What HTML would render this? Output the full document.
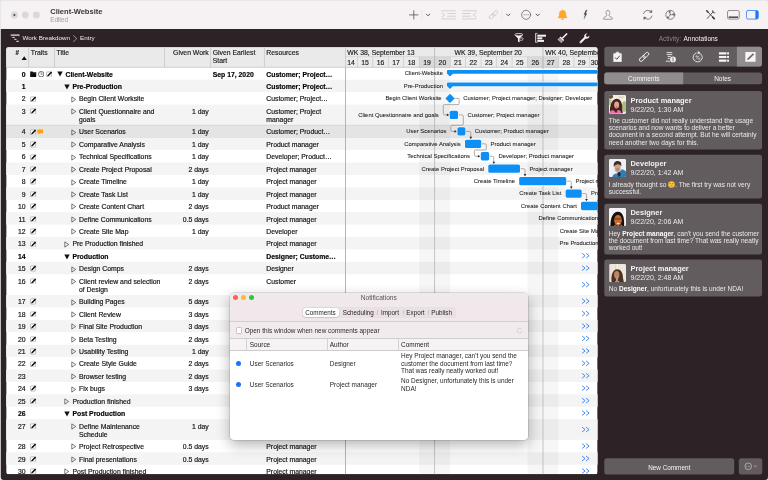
<!DOCTYPE html>
<html lang="en"><head><meta charset="utf-8"><title>Client-Website</title>
<style>
*{box-sizing:border-box;margin:0;padding:0}
html,body{width:768px;height:480px;overflow:hidden;background:#e9e9e9}
body{font-family:"Liberation Sans","DejaVu Sans",sans-serif;position:relative;-webkit-font-smoothing:antialiased}
.abs,.abs *{position:absolute}
#win{position:absolute;left:0;top:0;width:768px;height:480px;overflow:hidden;background:#2d2326;will-change:transform;transform:translateZ(0)}
#tbar{position:absolute;left:0;top:0;width:768px;height:29px;background:#f6f1f3}
.t{position:absolute;white-space:nowrap;line-height:1}
.tl{position:absolute;border-radius:50%;width:6.8px;height:6.8px;background:#dcd7d9;top:11.6px}
#tbl{position:absolute;overflow:hidden}
.hd{position:absolute;top:0;height:19.8px;background:#e8e8e8;border-right:0.6px solid #c4c4c4;border-bottom:0.6px solid #c9c9c9}
.ht{position:absolute;font-size:6.85px;color:#1a1a1a;white-space:nowrap;line-height:8.3px;-webkit-text-stroke:0.15px #1a1a1a}
.row{position:absolute;left:0;width:591px}
.c{position:absolute;font-size:6.85px;color:#141414;white-space:nowrap;line-height:8.3px;-webkit-text-stroke:0.18px #141414}
.b{font-weight:700;color:#000}
.g{position:absolute;font-size:5.9px;color:#1a1a1a;white-space:nowrap;line-height:8px;-webkit-text-stroke:0.06px #1a1a1a}
.bar{position:absolute;background:#0d8ff4;border-radius:1.6px;box-shadow:0 0 0 0.7px rgba(255,255,255,.85)}
.card{position:absolute;left:604.3px;width:157.7px}
.nm{position:absolute;left:26.2px;font-size:7.45px;font-weight:700;color:#f4f2f3;white-space:nowrap;line-height:9px}
.dt{position:absolute;left:26.2px;font-size:7px;color:#ecebeb;white-space:nowrap;line-height:9px}
.bd{position:absolute;left:4.4px;font-size:6.57px;color:#eceaea;white-space:nowrap;line-height:7.25px}
.bd b{color:#fff}
.av{position:absolute;left:4.4px;width:17.8px;height:18.2px;border-radius:1.8px;overflow:hidden}
.n{position:absolute;font-size:6.45px;color:#262626;white-space:nowrap;line-height:7.3px}
</style></head><body>
<div id="win">

<div id="tbar">
<svg style="position:absolute;left:8px;top:8px" width="36" height="14" viewBox="8 8 36 14"><circle cx="14.400" cy="15" r="3.450" fill="#dcd7d9"/><circle cx="25.350" cy="15" r="3.450" fill="#dcd7d9"/><circle cx="36.300" cy="15" r="3.450" fill="#dcd7d9"/><circle cx="14.400" cy="15" r="1.050" fill="#4a4648"/></svg>
<div class="t" style="left:50.2px;top:8px;font-size:7.55px;font-weight:700;color:#3a3638">Client-Website</div>
<div class="t" style="left:50.2px;top:17px;font-size:6.3px;color:#a09c9e">Edited</div>
<svg style="position:absolute;left:400px;top:0" width="368" height="29" viewBox="400 0 368 29" fill="none" stroke-linecap="round" stroke-linejoin="round">
<g stroke="#565254" stroke-width="0.8">
<path d="M409.600 14.900h8.400M413.800 10.700v8.400"/>
<path d="M426.400 14.100l1.700 1.700 1.700-1.700" stroke-width="1"/>
<path d="M506.600 14.100l1.700 1.700 1.700-1.700" stroke-width="1"/>
<path d="M536.050 14.100l1.700 1.700 1.700-1.700" stroke-width="1"/>
<circle cx="526.100" cy="14.800" r="4.500" stroke-width="0.7"/>
</g>
<g fill="#565254"><circle cx="524.100" cy="14.800" r="0.500"/><circle cx="526.100" cy="14.800" r="0.500"/><circle cx="528.100" cy="14.800" r="0.500"/></g>
<path d="M421.800 10.500v9M501.800 10.500v9" stroke="#e6e1e3" stroke-width="0.600"/>
<g stroke="#c6c2c4" stroke-width="0.7">
<path d="M441.600 10.800h13.800M447.800 13.500h7.600M447.800 16.200h7.600M441.600 18.900h13.800M442 13l2.800 1.900-2.800 1.900"/>
<path d="M462.600 10.800h13.800M462.600 13.500h7.600M462.600 16.200h7.600M462.600 18.900h13.800M476 13l-2.800 1.900 2.800 1.900"/>
<g transform="translate(493.400,14.800) rotate(-42)"><rect x="-5.300" y="-1.500" width="6.300" height="3" rx="1.500"/><rect x="-1" y="-1.500" width="6.300" height="3" rx="1.500"/></g>
</g>
<path d="M562.600 10.200c-2.200 0-3.300 1.600-3.300 3.500 0 2-.5 2.900-1.100 3.600-.3.300-.1.600.3.600h8.200c.4 0 .6-.3.300-.6-.6-.7-1.100-1.600-1.100-3.600 0-1.900-1.100-3.500-3.300-3.500zM561.400 18.700a1.200 1.200 0 0 0 2.400 0z" fill="#ffa62b" stroke="#ffa62b" stroke-width="0.300"/>
<path d="M585.900 10.300l-2 4.200h1.300l-1.300 4.600 3-5.500h-1.400l1.700-3.300z" fill="#3f3b3d" stroke="#3f3b3d" stroke-width="0.200"/>
<path d="M607.900 10.500c-1.200 0-1.900.9-1.900 2 0 .9.400 1.600.7 2.300.3.700 0 1.300-1 1.700-1.300.5-2.300 1-2.300 2.300 0 .3.200.4.400.4h8.200c.2 0 .4-.1.400-.4 0-1.300-1-1.800-2.300-2.300-1-.4-1.300-1-1-1.700.3-.7.700-1.400.7-2.300 0-1.100-.7-2-1.900-2z" stroke="#7d797b" stroke-width="0.750"/>
<g stroke="#565254" stroke-width="0.700">
<path d="M643.500 13.600a4.500 4.500 0 0 1 8-1.400M652.100 16a4.500 4.500 0 0 1-8 1.400"/>
<path d="M651.900 10.400l-.2 2.100-2.100-.3z M643.700 19.200l.2-2.100 2.100.3z" fill="#565254" stroke-width="0.400"/>
<circle cx="670.300" cy="14.800" r="4.500"/>
<path d="M670.300 14.800L669.600 11.800M670.300 14.800l3.200-.2M670.300 14.800l-2.300 2.800" stroke-width="0.600"/>
<path d="M668.800 11.300l1.700.2-.6 1.500zM673.900 13.700l-.2 1.700-1.400-.9zM667.400 18.200l.2-1.700 1.400.9z" fill="#565254" stroke-width="0.300"/>
</g>
<g stroke="#3f3b3d" stroke-width="0.850">
<path d="M707.600 11.600l6.400 6.800M713.400 11.500l-6.200 7"/>
<path d="M706.700 10.700l1.300 1.400" stroke-width="1.500"/>
<path d="M712.600 17l1.600 1.700" stroke-width="1.700"/>
<path d="M712.500 10.600a2 2 0 0 0 2.400 2.400" stroke-width="0.800"/>
</g>
<rect x="727.500" y="10.500" width="11.800" height="8.600" rx="1.500" stroke="#8b8789" stroke-width="0.900"/>
<path d="M728.600 17.200h9.600" stroke="#4a4648" stroke-width="1.500" stroke-linecap="butt"/>
<rect x="746.500" y="10.500" width="11.800" height="8.600" rx="1.500" stroke="#3f8cff" stroke-width="0.900"/>
<path d="M755.400 10.700h1.400a1.400 1.400 0 0 1 1.400 1.400v5.400a1.400 1.400 0 0 1-1.400 1.400H755.400z" fill="#1f74f6"/>
</svg>
</div>
<svg style="position:absolute;left:8px;top:32px" width="14" height="12" viewBox="0 0 14 12" fill="none" stroke="#f0eeee" stroke-width="0.9" stroke-linecap="round">
<path d="M3.300 3.100H11" stroke-width="1.200" stroke-linecap="butt"/><path d="M3.100 2.700v1.300M11.200 2.700v1.300" stroke-width="0.500"/><path d="M4.400 5.400h2.200M6.300 7.300h2.200M8.300 9.300h2.600" stroke-width="0.950" stroke-linecap="butt"/></svg>
<div class="t" style="left:22.5px;top:34.6px;font-size:6.25px;color:#efeded">Work Breakdown</div>
<svg style="position:absolute;left:72px;top:33.500px" width="6" height="10" viewBox="0 0 6 10" fill="none" stroke="#c4c0c1" stroke-width="0.700"><path d="M1.200 1.300l3.600 3.300L1.200 7.900"/></svg>
<div class="t" style="left:80px;top:34.6px;font-size:6.25px;color:#efeded">Entry</div>
<svg style="position:absolute;left:508px;top:30px" width="90" height="16" viewBox="508 30 90 16" fill="#f4f2f2" stroke="none">
<ellipse cx="518.800" cy="34.700" rx="4.100" ry="1.150" fill="none" stroke="#f4f2f2" stroke-width="0.800"/>
<path d="M514.900 35.200c1.500.9 6.300.9 7.800 0l-3.100 3.300v3.800l-1.600-.6v-3.200z"/>
<path d="M520 38.300c1.600-.9 3.200-.5 3.200.6s-1.600 1.700-3.200 1.300" fill="none" stroke="#f4f2f2" stroke-width="0.700"/>
<path d="M535.700 33.200v9.300" stroke="#f4f2f2" stroke-width="0.900"/>
<path d="M535.700 33.400h2M535.700 42.300h2" stroke="#f4f2f2" stroke-width="0.600"/>
<rect x="537.300" y="34.700" width="8.700" height="2"/><rect x="537.300" y="37.300" width="5" height="2"/><rect x="537.300" y="39.900" width="6.700" height="2"/>
<g transform="translate(562.200,38.400) rotate(-45)"><rect x="0" y="-0.800" width="7" height="1.600" rx="0.500"/><rect x="-1.300" y="-2.600" width="1.500" height="5.200"/><rect x="-4" y="-2.600" width="2.400" height="5.200" fill="#bdb9ba"/><path d="M-4 -1.300h2.400M-4 0h2.400M-4 1.300h2.400" stroke="#4a4446" stroke-width="0.400"/></g>
<path d="M587.500 33.600a2.700 2.700 0 0 0-3.200 3.500l-4.500 4.500a1.050 1.050 0 0 0 1.500 1.500l4.500-4.500a2.700 2.700 0 0 0 3.500-3.200l-1.600 1.600-1.500-.4-.4-1.500z"/>
<circle cx="580.700" cy="42.100" r="0.450" fill="#2d2326"/>
</svg>
<div class="t" style="left:658.700px;top:35.900px;font-size:6.500px;color:#8a8587;word-spacing:1px">Activity: <span style="color:#f4f2f2">Annotations</span></div>
<div id="tbl" style="left:6px;top:47px;width:592px;height:428px">
<svg style="position:absolute;left:0;top:0" width="592" height="428" viewBox="6 47 592 428"><defs><clipPath id="tclip"><rect x="6.2" y="47.2" width="591.4" height="427.1" rx="2.200"/></clipPath></defs><g clip-path="url(#tclip)"><rect x="6.2" y="47.2" width="591.4" height="427.1" fill="#fff"/><rect x="0" y="79.73" width="700" height="12.43" fill="#f4f4f4"/><rect x="0" y="104.59" width="700" height="20.6" fill="#f4f4f4"/><rect x="0" y="125.19" width="700" height="12.43" fill="#e4e4e4"/><rect x="0" y="124.89" width="700" height="0.600" fill="#cbcbcb"/><rect x="0" y="137.32" width="700" height="0.600" fill="#cbcbcb"/><rect x="0" y="137.62" width="700" height="12.43" fill="#f4f4f4"/><rect x="0" y="162.48" width="700" height="12.43" fill="#f4f4f4"/><rect x="0" y="187.34" width="700" height="12.43" fill="#f4f4f4"/><rect x="0" y="212.2" width="700" height="12.43" fill="#f4f4f4"/><rect x="0" y="237.06" width="700" height="12.43" fill="#f4f4f4"/><rect x="0" y="261.92" width="700" height="12.43" fill="#f4f4f4"/><rect x="0" y="294.95" width="700" height="12.43" fill="#f4f4f4"/><rect x="0" y="319.81" width="700" height="12.43" fill="#f4f4f4"/><rect x="0" y="344.67" width="700" height="12.43" fill="#f4f4f4"/><rect x="0" y="369.53" width="700" height="12.43" fill="#f4f4f4"/><rect x="0" y="394.39" width="700" height="12.43" fill="#f4f4f4"/><rect x="0" y="419.25" width="700" height="20.6" fill="#f4f4f4"/><rect x="0" y="452.28" width="700" height="12.43" fill="#f4f4f4"/><rect x="419.23" y="67.3" width="30.94" height="420" fill="#000" fill-opacity="0.035"/><rect x="527.52" y="67.3" width="30.94" height="420" fill="#000" fill-opacity="0.035"/><rect x="345" y="67.3" width="0.800" height="420" fill="#a4a4a4"/><rect x="0" y="40" width="700" height="27.3" fill="#eaeaea"/><rect x="345.4" y="56.8" width="300" height="10.5" fill="#ececec"/><rect x="419.23" y="56.8" width="15.47" height="10.5" fill="#d9d9d9"/><rect x="434.7" y="56.8" width="15.47" height="10.5" fill="#d9d9d9"/><rect x="527.52" y="56.8" width="15.47" height="10.5" fill="#d9d9d9"/><rect x="542.99" y="56.8" width="15.47" height="10.5" fill="#d9d9d9"/><rect x="345.4" y="56.5" width="300" height="0.600" fill="#cdcdcd"/><rect x="357.05" y="56.8" width="0.600" height="10.5" fill="#c4c4c4"/><rect x="372.52" y="56.8" width="0.600" height="10.5" fill="#c4c4c4"/><rect x="387.99" y="56.8" width="0.600" height="10.5" fill="#c4c4c4"/><rect x="403.46" y="56.8" width="0.600" height="10.5" fill="#c4c4c4"/><rect x="418.93" y="56.8" width="0.600" height="10.5" fill="#c4c4c4"/><rect x="434.4" y="56.8" width="0.600" height="10.5" fill="#c4c4c4"/><rect x="449.87" y="56.8" width="0.600" height="10.5" fill="#c4c4c4"/><rect x="465.34" y="56.8" width="0.600" height="10.5" fill="#c4c4c4"/><rect x="480.81" y="56.8" width="0.600" height="10.5" fill="#c4c4c4"/><rect x="496.28" y="56.8" width="0.600" height="10.5" fill="#c4c4c4"/><rect x="511.75" y="56.8" width="0.600" height="10.5" fill="#c4c4c4"/><rect x="527.22" y="56.8" width="0.600" height="10.5" fill="#c4c4c4"/><rect x="542.69" y="56.8" width="0.600" height="10.5" fill="#c4c4c4"/><rect x="558.16" y="56.8" width="0.600" height="10.5" fill="#c4c4c4"/><rect x="573.63" y="56.8" width="0.600" height="10.5" fill="#c4c4c4"/><rect x="589.1" y="56.8" width="0.600" height="10.5" fill="#c4c4c4"/><rect x="604.57" y="56.8" width="0.600" height="10.5" fill="#c4c4c4"/><rect x="28.4" y="47.2" width="0.700" height="20.1" fill="#c2c2c2"/><rect x="54.15" y="47.2" width="0.700" height="20.1" fill="#c2c2c2"/><rect x="164.15" y="47.2" width="0.700" height="20.1" fill="#c2c2c2"/><rect x="210.35" y="47.2" width="0.700" height="20.1" fill="#c2c2c2"/><rect x="263.95" y="47.2" width="0.700" height="20.1" fill="#c2c2c2"/><rect x="345.05" y="47.2" width="0.700" height="20.1" fill="#c2c2c2"/><rect x="0" y="66.85" width="700" height="0.750" fill="#c2c2c2"/><rect x="434.35" y="47.2" width="0.700" height="440" fill="#aeaeae"/><rect x="542.64" y="47.2" width="0.700" height="440" fill="#aeaeae"/><path d="M447.9 70H700V73.7H452.9L449.9 76.5L446.9 73.5V71Q446.9 70 447.9 70z" fill="#0d8ff4" stroke="#fff" stroke-opacity="0.9" stroke-width="1.300" paint-order="stroke" stroke-linejoin="round"/><path d="M447.9 82.43H700V86.13H452.9L449.9 88.93L446.9 85.93V83.43Q446.9 82.43 447.9 82.43z" fill="#0d8ff4" stroke="#fff" stroke-opacity="0.9" stroke-width="1.300" paint-order="stroke" stroke-linejoin="round"/><path d="M450 93.67L454.700 98.38L450 103.08L445.300 98.38z" fill="#0d8ff4" stroke="#fff" stroke-opacity="0.9" stroke-width="1.300" paint-order="stroke" stroke-linejoin="round"/><g fill="none" stroke="#707070" stroke-width="0.550" stroke-linejoin="round"><path d="M454.8 98.38H458Q459.2 98.38 459.2 99.58V103.39Q459.2 104.59 458 104.59H444.5Q443.3 104.59 443.3 105.79V113.69Q443.3 114.89 444.5 114.89H448.2"/><path d="M449.2 114.89l-2.400 -1.300v2.600z" fill="#2a2a2a" stroke="none"/><path d="M458 114.89H462.1Q463.3 114.89 463.3 116.09V123.99Q463.3 125.19 462.1 125.19H452Q450.8 125.19 450.8 126.39V130.21Q450.8 131.41 452 131.41H455.9"/><path d="M456.9 131.41l-2.400 -1.300v2.600z" fill="#2a2a2a" stroke="none"/><path d="M465.4 131.41H469.6Q470.8 131.41 470.8 132.6V138.19"/><path d="M470.8 139.19l-1.300 -2.400h2.600z" fill="#2a2a2a" stroke="none"/><path d="M481.2 143.84H485.1Q486.3 143.84 486.3 145.03V148.85Q486.3 150.05 485.1 150.05H475.6Q474.4 150.05 474.4 151.25V155.07Q474.4 156.27 475.6 156.27H479.3"/><path d="M480.3 156.27l-2.400 -1.300v2.600z" fill="#2a2a2a" stroke="none"/><path d="M489.2 156.27H492.6Q493.8 156.27 493.8 157.47V163.05"/><path d="M493.8 164.05l-1.300 -2.400h2.600z" fill="#2a2a2a" stroke="none"/><path d="M520 168.7H523.8Q525 168.7 525 169.9V175.48"/><path d="M525 176.48l-1.300 -2.400h2.600z" fill="#2a2a2a" stroke="none"/><path d="M566.2 181.13H570.1Q571.3 181.13 571.3 182.33V187.91"/><path d="M571.3 188.91l-1.300 -2.400h2.600z" fill="#2a2a2a" stroke="none"/><path d="M581.7 193.56H585.3Q586.5 193.56 586.5 194.76V200.34"/><path d="M586.5 201.34l-1.300 -2.400h2.600z" fill="#2a2a2a" stroke="none"/></g><rect x="449.7" y="110.74" width="8.3" height="8.300" rx="1.600" fill="#0d8ff4" stroke="#fff" stroke-opacity="0.9" stroke-width="1.300" paint-order="stroke" stroke-linejoin="round"/><rect x="457.4" y="127.25" width="8" height="8.300" rx="1.600" fill="#0d8ff4" stroke="#fff" stroke-opacity="0.9" stroke-width="1.300" paint-order="stroke" stroke-linejoin="round"/><rect x="465" y="139.69" width="16.2" height="8.300" rx="1.600" fill="#0d8ff4" stroke="#fff" stroke-opacity="0.9" stroke-width="1.300" paint-order="stroke" stroke-linejoin="round"/><rect x="480.8" y="152.12" width="8.4" height="8.300" rx="1.600" fill="#0d8ff4" stroke="#fff" stroke-opacity="0.9" stroke-width="1.300" paint-order="stroke" stroke-linejoin="round"/><rect x="488.3" y="164.55" width="31.7" height="8.300" rx="1.600" fill="#0d8ff4" stroke="#fff" stroke-opacity="0.9" stroke-width="1.300" paint-order="stroke" stroke-linejoin="round"/><rect x="519.2" y="176.98" width="47" height="8.300" rx="1.600" fill="#0d8ff4" stroke="#fff" stroke-opacity="0.9" stroke-width="1.300" paint-order="stroke" stroke-linejoin="round"/><rect x="565.6" y="189.41" width="16.1" height="8.300" rx="1.600" fill="#0d8ff4" stroke="#fff" stroke-opacity="0.9" stroke-width="1.300" paint-order="stroke" stroke-linejoin="round"/><rect x="581" y="201.84" width="39" height="8.300" rx="1.600" fill="#0d8ff4" stroke="#fff" stroke-opacity="0.9" stroke-width="1.300" paint-order="stroke" stroke-linejoin="round"/><g fill="none" stroke="#1d6fe0" stroke-width="0.800"><path d="M582.100 253.31l3 2.400l-3 2.400M586.100 253.31l3 2.400l-3 2.400"/><path d="M582.100 265.74l3 2.400l-3 2.400M586.100 265.74l3 2.400l-3 2.400"/><path d="M582.100 282.25l3 2.400l-3 2.400M586.100 282.25l3 2.400l-3 2.400"/><path d="M582.100 298.77l3 2.400l-3 2.400M586.100 298.77l3 2.400l-3 2.400"/><path d="M582.100 311.2l3 2.400l-3 2.400M586.100 311.2l3 2.400l-3 2.400"/><path d="M582.100 323.63l3 2.400l-3 2.400M586.100 323.63l3 2.400l-3 2.400"/><path d="M582.100 336.06l3 2.400l-3 2.400M586.100 336.06l3 2.400l-3 2.400"/><path d="M582.100 348.49l3 2.400l-3 2.400M586.100 348.49l3 2.400l-3 2.400"/><path d="M582.100 360.92l3 2.400l-3 2.400M586.100 360.92l3 2.400l-3 2.400"/><path d="M582.100 373.35l3 2.400l-3 2.400M586.100 373.35l3 2.400l-3 2.400"/><path d="M582.100 385.78l3 2.400l-3 2.400M586.100 385.78l3 2.400l-3 2.400"/><path d="M582.100 398.21l3 2.400l-3 2.400M586.100 398.21l3 2.400l-3 2.400"/><path d="M582.100 410.64l3 2.400l-3 2.400M586.100 410.64l3 2.400l-3 2.400"/><path d="M582.100 427.15l3 2.400l-3 2.400M586.100 427.15l3 2.400l-3 2.400"/><path d="M582.100 443.67l3 2.400l-3 2.400M586.100 443.67l3 2.400l-3 2.400"/><path d="M582.100 456.1l3 2.400l-3 2.400M586.100 456.1l3 2.400l-3 2.400"/><path d="M582.100 468.53l3 2.400l-3 2.400M586.100 468.53l3 2.400l-3 2.400"/></g></g></svg>
<div class="ht" style="left:9.6px;top:1.6px;font-size:6.300px;font-weight:700">#</div>
<svg style="position:absolute;left:14.5px;top:8.5px" width="6.400" height="4.600" viewBox="0 0 6.400 4.600"><path d="M0.300 4.400L3.200 0.300l2.900 4.100z" fill="#111"/></svg>
<div class="ht" style="left:24.75px;top:1.8px">Traits</div>
<div class="ht" style="left:50.5px;top:1.8px">Title</div>
<div class="ht" style="right:389.3px;top:1.8px">Given Work</div>
<div class="ht" style="left:206.7px;top:1.8px">Given Earliest<br>Start</div>
<div class="ht" style="left:260.3px;top:1.8px">Resources</div>
<div class="ht" style="left:337.37px;top:11.7px;width:15.47px;text-align:center">14</div>
<div class="ht" style="left:351.35px;top:11.7px;width:15.47px;text-align:center">15</div>
<div class="ht" style="left:366.82px;top:11.7px;width:15.47px;text-align:center">16</div>
<div class="ht" style="left:382.29px;top:11.7px;width:15.47px;text-align:center">17</div>
<div class="ht" style="left:397.76px;top:11.7px;width:15.47px;text-align:center">18</div>
<div class="ht" style="left:413.23px;top:11.7px;width:15.47px;text-align:center">19</div>
<div class="ht" style="left:428.7px;top:11.7px;width:15.47px;text-align:center">20</div>
<div class="ht" style="left:444.17px;top:11.7px;width:15.47px;text-align:center">21</div>
<div class="ht" style="left:459.64px;top:11.7px;width:15.47px;text-align:center">22</div>
<div class="ht" style="left:475.11px;top:11.7px;width:15.47px;text-align:center">23</div>
<div class="ht" style="left:490.58px;top:11.7px;width:15.47px;text-align:center">24</div>
<div class="ht" style="left:506.05px;top:11.7px;width:15.47px;text-align:center">25</div>
<div class="ht" style="left:521.52px;top:11.7px;width:15.47px;text-align:center">26</div>
<div class="ht" style="left:536.99px;top:11.7px;width:15.47px;text-align:center">27</div>
<div class="ht" style="left:552.46px;top:11.7px;width:15.47px;text-align:center">28</div>
<div class="ht" style="left:567.93px;top:11.7px;width:15.47px;text-align:center">29</div>
<div class="ht" style="left:580.87px;top:11.7px;width:15.47px;text-align:center">30</div>
<div class="ht" style="left:341.3px;top:1.5px">WK 38, September 13</div>
<div class="ht" style="left:448.6px;top:1.5px">WK 39, September 20</div>
<div class="ht" style="left:539.2px;top:1.5px">WK 40, September 27</div>
<div class="c b" style="right:572.4px;top:23.6px">0</div>
<svg style="position:absolute;left:24.2px;top:23.8px" width="6.400" height="6.400" viewBox="0 0 7 7"><path d="M0.200 0.500h2.600l0.700 0.900h3.300v5.300H0.200z" fill="#0c0c0c"/><path d="M0.200 2.300h6.600" stroke="#555" stroke-width="0.350"/></svg>
<svg style="position:absolute;left:32px;top:23.8px" width="6.400" height="6.400" viewBox="0 0 7 7"><circle cx="3.500" cy="3.500" r="3" fill="#fff" stroke="#222" stroke-width="0.700"/><path d="M3.500 1.500v2.100h1.600" fill="none" stroke="#222" stroke-width="0.600"/></svg>
<svg style="position:absolute;left:39.8px;top:23.8px" width="6.400" height="6.400" viewBox="0 0 7 7"><rect x="0.500" y="1" width="5.600" height="5.600" rx="0.700" fill="#fff" stroke="#8e8e8e" stroke-width="0.600"/><path d="M1.300 6l0.500-1.700L5.600 0.500l1.200 1.200L3 5.500z" fill="#0c0c0c"/></svg>
<svg style="position:absolute;left:50.8px;top:24.4px" width="6" height="6" viewBox="0 0 6 6"><path d="M0.300 0.600h5.400L3 5.400z" fill="#111"/></svg>
<div class="c b" style="left:59.5px;top:23.6px">Client-Website</div>
<div class="c b" style="left:206.7px;top:23.6px">Sep 17, 2020</div>
<div class="c b" style="left:260.3px;top:23.6px">Customer; Project…</div>
<div class="c b" style="right:572.4px;top:36.03px">1</div>
<svg style="position:absolute;left:57.8px;top:36.83px" width="6" height="6" viewBox="0 0 6 6"><path d="M0.300 0.600h5.400L3 5.400z" fill="#111"/></svg>
<div class="c b" style="left:66.4px;top:36.03px">Pre-Production</div>
<div class="c b" style="left:260.3px;top:36.03px">Customer; Project…</div>
<div class="c" style="right:572.4px;top:48.46px">2</div>
<svg style="position:absolute;left:24.2px;top:48.66px" width="6.400" height="6.400" viewBox="0 0 7 7"><rect x="0.500" y="1" width="5.600" height="5.600" rx="0.700" fill="#fff" stroke="#8e8e8e" stroke-width="0.600"/><path d="M1.300 6l0.500-1.700L5.600 0.500l1.200 1.200L3 5.500z" fill="#0c0c0c"/></svg>
<svg style="position:absolute;left:65.2px;top:48.76px" width="6" height="7" viewBox="0 0 6 7"><path d="M0.800 0.900L4.700 3.500 0.800 6.100z" fill="none" stroke="#333" stroke-width="0.650"/></svg>
<div class="c" style="left:73px;top:48.46px">Begin Client Worksite</div>
<div class="c" style="left:260.3px;top:48.46px">Customer; Project…</div>
<div class="c" style="right:572.4px;top:60.89px">3</div>
<svg style="position:absolute;left:24.2px;top:61.09px" width="6.400" height="6.400" viewBox="0 0 7 7"><rect x="0.500" y="1" width="5.600" height="5.600" rx="0.700" fill="#fff" stroke="#8e8e8e" stroke-width="0.600"/><path d="M1.300 6l0.500-1.700L5.600 0.500l1.200 1.200L3 5.500z" fill="#0c0c0c"/></svg>
<svg style="position:absolute;left:65.2px;top:61.19px" width="6" height="7" viewBox="0 0 6 7"><path d="M0.800 0.900L4.700 3.500 0.800 6.100z" fill="none" stroke="#333" stroke-width="0.650"/></svg>
<div class="c" style="left:73px;top:60.89px">Client Questionnaire and<br>goals</div>
<div class="c" style="right:389.3px;top:60.89px">1 day</div>
<div class="c" style="left:260.3px;top:60.89px">Customer; Project<br>manager</div>
<div class="c" style="right:572.4px;top:81.49px">4</div>
<svg style="position:absolute;left:24.2px;top:81.69px" width="6.400" height="6.400" viewBox="0 0 7 7"><rect x="0.500" y="1" width="5.600" height="5.600" rx="0.700" fill="#fff" stroke="#8e8e8e" stroke-width="0.600"/><path d="M1.300 6l0.500-1.700L5.600 0.500l1.200 1.200L3 5.500z" fill="#0c0c0c"/></svg>
<svg style="position:absolute;left:31.3px;top:81.69px" width="6.400" height="6.400" viewBox="0 0 7 7"><path d="M0.400 0.600h6.200v4H3.400L1.800 6.400V4.600H0.400z" fill="#ff9f0a"/></svg>
<svg style="position:absolute;left:65.2px;top:81.79px" width="6" height="7" viewBox="0 0 6 7"><path d="M0.800 0.900L4.700 3.500 0.800 6.100z" fill="none" stroke="#333" stroke-width="0.650"/></svg>
<div class="c" style="left:73px;top:81.49px">User Scenarios</div>
<div class="c" style="right:389.3px;top:81.49px">1 day</div>
<div class="c" style="left:260.3px;top:81.49px">Customer; Product…</div>
<div class="c" style="right:572.4px;top:93.92px">5</div>
<svg style="position:absolute;left:24.2px;top:94.12px" width="6.400" height="6.400" viewBox="0 0 7 7"><rect x="0.500" y="1" width="5.600" height="5.600" rx="0.700" fill="#fff" stroke="#8e8e8e" stroke-width="0.600"/><path d="M1.300 6l0.500-1.700L5.600 0.500l1.200 1.200L3 5.500z" fill="#0c0c0c"/></svg>
<svg style="position:absolute;left:65.2px;top:94.22px" width="6" height="7" viewBox="0 0 6 7"><path d="M0.800 0.900L4.700 3.500 0.800 6.100z" fill="none" stroke="#333" stroke-width="0.650"/></svg>
<div class="c" style="left:73px;top:93.92px">Comparative Analysis</div>
<div class="c" style="right:389.3px;top:93.92px">1 day</div>
<div class="c" style="left:260.3px;top:93.92px">Product manager</div>
<div class="c" style="right:572.4px;top:106.35px">6</div>
<svg style="position:absolute;left:24.2px;top:106.55px" width="6.400" height="6.400" viewBox="0 0 7 7"><rect x="0.500" y="1" width="5.600" height="5.600" rx="0.700" fill="#fff" stroke="#8e8e8e" stroke-width="0.600"/><path d="M1.300 6l0.500-1.700L5.600 0.500l1.200 1.200L3 5.500z" fill="#0c0c0c"/></svg>
<svg style="position:absolute;left:65.2px;top:106.65px" width="6" height="7" viewBox="0 0 6 7"><path d="M0.800 0.900L4.700 3.500 0.800 6.100z" fill="none" stroke="#333" stroke-width="0.650"/></svg>
<div class="c" style="left:73px;top:106.35px">Technical Specifications</div>
<div class="c" style="right:389.3px;top:106.35px">1 day</div>
<div class="c" style="left:260.3px;top:106.35px">Developer; Product…</div>
<div class="c" style="right:572.4px;top:118.78px">7</div>
<svg style="position:absolute;left:24.2px;top:118.98px" width="6.400" height="6.400" viewBox="0 0 7 7"><rect x="0.500" y="1" width="5.600" height="5.600" rx="0.700" fill="#fff" stroke="#8e8e8e" stroke-width="0.600"/><path d="M1.300 6l0.500-1.700L5.600 0.500l1.200 1.200L3 5.500z" fill="#0c0c0c"/></svg>
<svg style="position:absolute;left:65.2px;top:119.08px" width="6" height="7" viewBox="0 0 6 7"><path d="M0.800 0.900L4.700 3.500 0.800 6.100z" fill="none" stroke="#333" stroke-width="0.650"/></svg>
<div class="c" style="left:73px;top:118.78px">Create Project Proposal</div>
<div class="c" style="right:389.3px;top:118.78px">2 days</div>
<div class="c" style="left:260.3px;top:118.78px">Project manager</div>
<div class="c" style="right:572.4px;top:131.21px">8</div>
<svg style="position:absolute;left:24.2px;top:131.41px" width="6.400" height="6.400" viewBox="0 0 7 7"><rect x="0.500" y="1" width="5.600" height="5.600" rx="0.700" fill="#fff" stroke="#8e8e8e" stroke-width="0.600"/><path d="M1.300 6l0.500-1.700L5.600 0.500l1.200 1.200L3 5.500z" fill="#0c0c0c"/></svg>
<svg style="position:absolute;left:65.2px;top:131.51px" width="6" height="7" viewBox="0 0 6 7"><path d="M0.800 0.900L4.700 3.500 0.800 6.100z" fill="none" stroke="#333" stroke-width="0.650"/></svg>
<div class="c" style="left:73px;top:131.21px">Create Timeline</div>
<div class="c" style="right:389.3px;top:131.21px">1 day</div>
<div class="c" style="left:260.3px;top:131.21px">Project manager</div>
<div class="c" style="right:572.4px;top:143.64px">9</div>
<svg style="position:absolute;left:24.2px;top:143.84px" width="6.400" height="6.400" viewBox="0 0 7 7"><rect x="0.500" y="1" width="5.600" height="5.600" rx="0.700" fill="#fff" stroke="#8e8e8e" stroke-width="0.600"/><path d="M1.300 6l0.500-1.700L5.600 0.500l1.200 1.200L3 5.500z" fill="#0c0c0c"/></svg>
<svg style="position:absolute;left:65.2px;top:143.94px" width="6" height="7" viewBox="0 0 6 7"><path d="M0.800 0.900L4.700 3.500 0.800 6.100z" fill="none" stroke="#333" stroke-width="0.650"/></svg>
<div class="c" style="left:73px;top:143.64px">Create Task List</div>
<div class="c" style="right:389.3px;top:143.64px">1 day</div>
<div class="c" style="left:260.3px;top:143.64px">Project manager</div>
<div class="c" style="right:572.4px;top:156.07px">10</div>
<svg style="position:absolute;left:24.2px;top:156.27px" width="6.400" height="6.400" viewBox="0 0 7 7"><rect x="0.500" y="1" width="5.600" height="5.600" rx="0.700" fill="#fff" stroke="#8e8e8e" stroke-width="0.600"/><path d="M1.300 6l0.500-1.700L5.600 0.500l1.200 1.200L3 5.500z" fill="#0c0c0c"/></svg>
<svg style="position:absolute;left:65.2px;top:156.37px" width="6" height="7" viewBox="0 0 6 7"><path d="M0.800 0.900L4.700 3.500 0.800 6.100z" fill="none" stroke="#333" stroke-width="0.650"/></svg>
<div class="c" style="left:73px;top:156.07px">Create Content Chart</div>
<div class="c" style="right:389.3px;top:156.07px">2 days</div>
<div class="c" style="left:260.3px;top:156.07px">Product manager</div>
<div class="c" style="right:572.4px;top:168.5px">11</div>
<svg style="position:absolute;left:24.2px;top:168.7px" width="6.400" height="6.400" viewBox="0 0 7 7"><rect x="0.500" y="1" width="5.600" height="5.600" rx="0.700" fill="#fff" stroke="#8e8e8e" stroke-width="0.600"/><path d="M1.300 6l0.500-1.700L5.600 0.500l1.200 1.200L3 5.500z" fill="#0c0c0c"/></svg>
<svg style="position:absolute;left:65.2px;top:168.8px" width="6" height="7" viewBox="0 0 6 7"><path d="M0.800 0.900L4.700 3.500 0.800 6.100z" fill="none" stroke="#333" stroke-width="0.650"/></svg>
<div class="c" style="left:73px;top:168.5px">Define Communications</div>
<div class="c" style="right:389.3px;top:168.5px">0.5 days</div>
<div class="c" style="left:260.3px;top:168.5px">Project manager</div>
<div class="c" style="right:572.4px;top:180.93px">12</div>
<svg style="position:absolute;left:24.2px;top:181.13px" width="6.400" height="6.400" viewBox="0 0 7 7"><rect x="0.500" y="1" width="5.600" height="5.600" rx="0.700" fill="#fff" stroke="#8e8e8e" stroke-width="0.600"/><path d="M1.300 6l0.500-1.700L5.600 0.500l1.200 1.200L3 5.500z" fill="#0c0c0c"/></svg>
<svg style="position:absolute;left:65.2px;top:181.23px" width="6" height="7" viewBox="0 0 6 7"><path d="M0.800 0.900L4.700 3.500 0.800 6.100z" fill="none" stroke="#333" stroke-width="0.650"/></svg>
<div class="c" style="left:73px;top:180.93px">Create Site Map</div>
<div class="c" style="right:389.3px;top:180.93px">1 day</div>
<div class="c" style="left:260.3px;top:180.93px">Developer</div>
<div class="c" style="right:572.4px;top:193.36px">13</div>
<svg style="position:absolute;left:24.2px;top:193.56px" width="6.400" height="6.400" viewBox="0 0 7 7"><rect x="0.500" y="1" width="5.600" height="5.600" rx="0.700" fill="#fff" stroke="#8e8e8e" stroke-width="0.600"/><path d="M1.300 6l0.500-1.700L5.600 0.500l1.200 1.200L3 5.500z" fill="#0c0c0c"/></svg>
<svg style="position:absolute;left:58px;top:193.66px" width="6" height="7" viewBox="0 0 6 7"><path d="M0.800 0.900L4.700 3.500 0.800 6.100z" fill="none" stroke="#333" stroke-width="0.650"/></svg>
<div class="c" style="left:66.4px;top:193.36px">Pre Production finished</div>
<div class="c" style="left:260.3px;top:193.36px">Project manager</div>
<div class="c b" style="right:572.4px;top:205.79px">14</div>
<svg style="position:absolute;left:57.8px;top:206.59px" width="6" height="6" viewBox="0 0 6 6"><path d="M0.300 0.600h5.400L3 5.400z" fill="#111"/></svg>
<div class="c b" style="left:66.4px;top:205.79px">Production</div>
<div class="c b" style="left:260.3px;top:205.79px">Designer; Custome…</div>
<div class="c" style="right:572.4px;top:218.22px">15</div>
<svg style="position:absolute;left:24.2px;top:218.42px" width="6.400" height="6.400" viewBox="0 0 7 7"><rect x="0.500" y="1" width="5.600" height="5.600" rx="0.700" fill="#fff" stroke="#8e8e8e" stroke-width="0.600"/><path d="M1.300 6l0.500-1.700L5.600 0.500l1.200 1.200L3 5.500z" fill="#0c0c0c"/></svg>
<svg style="position:absolute;left:65.2px;top:218.52px" width="6" height="7" viewBox="0 0 6 7"><path d="M0.800 0.900L4.700 3.500 0.800 6.100z" fill="none" stroke="#333" stroke-width="0.650"/></svg>
<div class="c" style="left:73px;top:218.22px">Design Comps</div>
<div class="c" style="right:389.3px;top:218.22px">2 days</div>
<div class="c" style="left:260.3px;top:218.22px">Designer</div>
<div class="c" style="right:572.4px;top:230.65px">16</div>
<svg style="position:absolute;left:24.2px;top:230.85px" width="6.400" height="6.400" viewBox="0 0 7 7"><rect x="0.500" y="1" width="5.600" height="5.600" rx="0.700" fill="#fff" stroke="#8e8e8e" stroke-width="0.600"/><path d="M1.300 6l0.500-1.700L5.600 0.500l1.200 1.200L3 5.500z" fill="#0c0c0c"/></svg>
<svg style="position:absolute;left:65.2px;top:230.95px" width="6" height="7" viewBox="0 0 6 7"><path d="M0.800 0.900L4.700 3.500 0.800 6.100z" fill="none" stroke="#333" stroke-width="0.650"/></svg>
<div class="c" style="left:73px;top:230.65px">Client review and selection<br>of Design</div>
<div class="c" style="right:389.3px;top:230.65px">2 days</div>
<div class="c" style="left:260.3px;top:230.65px">Customer</div>
<div class="c" style="right:572.4px;top:251.25px">17</div>
<svg style="position:absolute;left:24.2px;top:251.45px" width="6.400" height="6.400" viewBox="0 0 7 7"><rect x="0.500" y="1" width="5.600" height="5.600" rx="0.700" fill="#fff" stroke="#8e8e8e" stroke-width="0.600"/><path d="M1.300 6l0.500-1.700L5.600 0.500l1.200 1.200L3 5.500z" fill="#0c0c0c"/></svg>
<svg style="position:absolute;left:65.2px;top:251.55px" width="6" height="7" viewBox="0 0 6 7"><path d="M0.800 0.900L4.700 3.500 0.800 6.100z" fill="none" stroke="#333" stroke-width="0.650"/></svg>
<div class="c" style="left:73px;top:251.25px">Building Pages</div>
<div class="c" style="right:389.3px;top:251.25px">5 days</div>
<div class="c" style="left:260.3px;top:251.25px">Designer</div>
<div class="c" style="right:572.4px;top:263.68px">18</div>
<svg style="position:absolute;left:24.2px;top:263.88px" width="6.400" height="6.400" viewBox="0 0 7 7"><rect x="0.500" y="1" width="5.600" height="5.600" rx="0.700" fill="#fff" stroke="#8e8e8e" stroke-width="0.600"/><path d="M1.300 6l0.500-1.700L5.600 0.500l1.200 1.200L3 5.500z" fill="#0c0c0c"/></svg>
<svg style="position:absolute;left:65.2px;top:263.98px" width="6" height="7" viewBox="0 0 6 7"><path d="M0.800 0.900L4.700 3.500 0.800 6.100z" fill="none" stroke="#333" stroke-width="0.650"/></svg>
<div class="c" style="left:73px;top:263.68px">Client Review</div>
<div class="c" style="right:389.3px;top:263.68px">3 days</div>
<div class="c" style="left:260.3px;top:263.68px">Customer</div>
<div class="c" style="right:572.4px;top:276.11px">19</div>
<svg style="position:absolute;left:24.2px;top:276.31px" width="6.400" height="6.400" viewBox="0 0 7 7"><rect x="0.500" y="1" width="5.600" height="5.600" rx="0.700" fill="#fff" stroke="#8e8e8e" stroke-width="0.600"/><path d="M1.300 6l0.500-1.700L5.600 0.500l1.200 1.200L3 5.500z" fill="#0c0c0c"/></svg>
<svg style="position:absolute;left:65.2px;top:276.41px" width="6" height="7" viewBox="0 0 6 7"><path d="M0.800 0.900L4.700 3.500 0.800 6.100z" fill="none" stroke="#333" stroke-width="0.650"/></svg>
<div class="c" style="left:73px;top:276.11px">Final Site Production</div>
<div class="c" style="right:389.3px;top:276.11px">3 days</div>
<div class="c" style="left:260.3px;top:276.11px">Developer</div>
<div class="c" style="right:572.4px;top:288.54px">20</div>
<svg style="position:absolute;left:24.2px;top:288.74px" width="6.400" height="6.400" viewBox="0 0 7 7"><rect x="0.500" y="1" width="5.600" height="5.600" rx="0.700" fill="#fff" stroke="#8e8e8e" stroke-width="0.600"/><path d="M1.300 6l0.500-1.700L5.600 0.500l1.200 1.200L3 5.500z" fill="#0c0c0c"/></svg>
<svg style="position:absolute;left:65.2px;top:288.84px" width="6" height="7" viewBox="0 0 6 7"><path d="M0.800 0.900L4.700 3.500 0.800 6.100z" fill="none" stroke="#333" stroke-width="0.650"/></svg>
<div class="c" style="left:73px;top:288.54px">Beta Testing</div>
<div class="c" style="right:389.3px;top:288.54px">2 days</div>
<div class="c" style="left:260.3px;top:288.54px">Developer</div>
<div class="c" style="right:572.4px;top:300.97px">21</div>
<svg style="position:absolute;left:24.2px;top:301.17px" width="6.400" height="6.400" viewBox="0 0 7 7"><rect x="0.500" y="1" width="5.600" height="5.600" rx="0.700" fill="#fff" stroke="#8e8e8e" stroke-width="0.600"/><path d="M1.300 6l0.500-1.700L5.600 0.500l1.200 1.200L3 5.500z" fill="#0c0c0c"/></svg>
<svg style="position:absolute;left:65.2px;top:301.27px" width="6" height="7" viewBox="0 0 6 7"><path d="M0.800 0.900L4.700 3.500 0.800 6.100z" fill="none" stroke="#333" stroke-width="0.650"/></svg>
<div class="c" style="left:73px;top:300.97px">Usability Testing</div>
<div class="c" style="right:389.3px;top:300.97px">1 day</div>
<div class="c" style="left:260.3px;top:300.97px">Developer</div>
<div class="c" style="right:572.4px;top:313.4px">22</div>
<svg style="position:absolute;left:24.2px;top:313.6px" width="6.400" height="6.400" viewBox="0 0 7 7"><rect x="0.500" y="1" width="5.600" height="5.600" rx="0.700" fill="#fff" stroke="#8e8e8e" stroke-width="0.600"/><path d="M1.300 6l0.500-1.700L5.600 0.500l1.200 1.200L3 5.500z" fill="#0c0c0c"/></svg>
<svg style="position:absolute;left:65.2px;top:313.7px" width="6" height="7" viewBox="0 0 6 7"><path d="M0.800 0.900L4.700 3.500 0.800 6.100z" fill="none" stroke="#333" stroke-width="0.650"/></svg>
<div class="c" style="left:73px;top:313.4px">Create Style Guide</div>
<div class="c" style="right:389.3px;top:313.4px">2 days</div>
<div class="c" style="left:260.3px;top:313.4px">Designer</div>
<div class="c" style="right:572.4px;top:325.83px">23</div>
<svg style="position:absolute;left:65.2px;top:326.13px" width="6" height="7" viewBox="0 0 6 7"><path d="M0.800 0.900L4.700 3.500 0.800 6.100z" fill="none" stroke="#333" stroke-width="0.650"/></svg>
<div class="c" style="left:73px;top:325.83px">Browser testing</div>
<div class="c" style="right:389.3px;top:325.83px">2 days</div>
<div class="c" style="right:572.4px;top:338.26px">24</div>
<svg style="position:absolute;left:24.2px;top:338.46px" width="6.400" height="6.400" viewBox="0 0 7 7"><rect x="0.500" y="1" width="5.600" height="5.600" rx="0.700" fill="#fff" stroke="#8e8e8e" stroke-width="0.600"/><path d="M1.300 6l0.500-1.700L5.600 0.500l1.200 1.200L3 5.500z" fill="#0c0c0c"/></svg>
<svg style="position:absolute;left:65.2px;top:338.56px" width="6" height="7" viewBox="0 0 6 7"><path d="M0.800 0.900L4.700 3.500 0.800 6.100z" fill="none" stroke="#333" stroke-width="0.650"/></svg>
<div class="c" style="left:73px;top:338.26px">Fix bugs</div>
<div class="c" style="right:389.3px;top:338.26px">3 days</div>
<div class="c" style="left:260.3px;top:338.26px">Developer</div>
<div class="c" style="right:572.4px;top:350.69px">25</div>
<svg style="position:absolute;left:24.2px;top:350.89px" width="6.400" height="6.400" viewBox="0 0 7 7"><rect x="0.500" y="1" width="5.600" height="5.600" rx="0.700" fill="#fff" stroke="#8e8e8e" stroke-width="0.600"/><path d="M1.300 6l0.500-1.700L5.600 0.500l1.200 1.200L3 5.500z" fill="#0c0c0c"/></svg>
<svg style="position:absolute;left:58px;top:350.99px" width="6" height="7" viewBox="0 0 6 7"><path d="M0.800 0.900L4.700 3.500 0.800 6.100z" fill="none" stroke="#333" stroke-width="0.650"/></svg>
<div class="c" style="left:66.4px;top:350.69px">Production finished</div>
<div class="c" style="left:260.3px;top:350.69px">Project manager</div>
<div class="c b" style="right:572.4px;top:363.12px">26</div>
<svg style="position:absolute;left:57.8px;top:363.92px" width="6" height="6" viewBox="0 0 6 6"><path d="M0.300 0.600h5.400L3 5.400z" fill="#111"/></svg>
<div class="c b" style="left:66.4px;top:363.12px">Post Production</div>
<div class="c b" style="left:260.3px;top:363.12px">Project manager</div>
<div class="c" style="right:572.4px;top:375.55px">27</div>
<svg style="position:absolute;left:24.2px;top:375.75px" width="6.400" height="6.400" viewBox="0 0 7 7"><rect x="0.500" y="1" width="5.600" height="5.600" rx="0.700" fill="#fff" stroke="#8e8e8e" stroke-width="0.600"/><path d="M1.300 6l0.500-1.700L5.600 0.500l1.200 1.200L3 5.500z" fill="#0c0c0c"/></svg>
<svg style="position:absolute;left:65.2px;top:375.85px" width="6" height="7" viewBox="0 0 6 7"><path d="M0.800 0.900L4.700 3.500 0.800 6.100z" fill="none" stroke="#333" stroke-width="0.650"/></svg>
<div class="c" style="left:73px;top:375.55px">Define Maintenance<br>Schedule</div>
<div class="c" style="right:389.3px;top:375.55px">1 day</div>
<div class="c" style="left:260.3px;top:375.55px">Developer</div>
<div class="c" style="right:572.4px;top:396.15px">28</div>
<svg style="position:absolute;left:24.2px;top:396.35px" width="6.400" height="6.400" viewBox="0 0 7 7"><rect x="0.500" y="1" width="5.600" height="5.600" rx="0.700" fill="#fff" stroke="#8e8e8e" stroke-width="0.600"/><path d="M1.300 6l0.500-1.700L5.600 0.500l1.200 1.200L3 5.500z" fill="#0c0c0c"/></svg>
<svg style="position:absolute;left:65.2px;top:396.45px" width="6" height="7" viewBox="0 0 6 7"><path d="M0.800 0.900L4.700 3.500 0.800 6.100z" fill="none" stroke="#333" stroke-width="0.650"/></svg>
<div class="c" style="left:73px;top:396.15px">Project Retrospective</div>
<div class="c" style="right:389.3px;top:396.15px">0.5 days</div>
<div class="c" style="left:260.3px;top:396.15px">Project manager</div>
<div class="c" style="right:572.4px;top:408.58px">29</div>
<svg style="position:absolute;left:24.2px;top:408.78px" width="6.400" height="6.400" viewBox="0 0 7 7"><rect x="0.500" y="1" width="5.600" height="5.600" rx="0.700" fill="#fff" stroke="#8e8e8e" stroke-width="0.600"/><path d="M1.300 6l0.500-1.700L5.600 0.500l1.200 1.200L3 5.500z" fill="#0c0c0c"/></svg>
<svg style="position:absolute;left:65.2px;top:408.88px" width="6" height="7" viewBox="0 0 6 7"><path d="M0.800 0.900L4.700 3.500 0.800 6.100z" fill="none" stroke="#333" stroke-width="0.650"/></svg>
<div class="c" style="left:73px;top:408.58px">Final presentations</div>
<div class="c" style="right:389.3px;top:408.58px">0.5 days</div>
<div class="c" style="left:260.3px;top:408.58px">Project manager</div>
<div class="c" style="right:572.4px;top:421.01px">30</div>
<svg style="position:absolute;left:24.2px;top:421.21px" width="6.400" height="6.400" viewBox="0 0 7 7"><rect x="0.500" y="1" width="5.600" height="5.600" rx="0.700" fill="#fff" stroke="#8e8e8e" stroke-width="0.600"/><path d="M1.300 6l0.500-1.700L5.600 0.500l1.200 1.200L3 5.500z" fill="#0c0c0c"/></svg>
<svg style="position:absolute;left:58px;top:421.31px" width="6" height="7" viewBox="0 0 6 7"><path d="M0.800 0.900L4.700 3.500 0.800 6.100z" fill="none" stroke="#333" stroke-width="0.650"/></svg>
<div class="c" style="left:66.4px;top:421.01px">Post Production finished</div>
<div class="c" style="left:260.3px;top:421.01px">Project manager</div>
<div class="g" style="right:155px;top:22.41px">Client-Website</div>
<div class="g" style="right:155px;top:34.84px">Pre-Production</div>
<div class="g" style="right:156.4px;top:47.27px">Begin Client Worksite</div>
<div class="g" style="left:457.2px;top:47.27px">Customer; Project manager; Designer; Developer</div>
<div class="g" style="right:159.2px;top:63.79px">Client Questionnaire and goals</div>
<div class="g" style="left:461.4px;top:63.79px">Customer; Project manager</div>
<div class="g" style="right:151.5px;top:80.31px">User Scenarios</div>
<div class="g" style="left:468.8px;top:80.31px">Customer; Product manager</div>
<div class="g" style="right:137.2px;top:92.74px">Comparative Analysis</div>
<div class="g" style="left:484.6px;top:92.74px">Product manager</div>
<div class="g" style="right:128.1px;top:105.17px">Technical Specifications</div>
<div class="g" style="left:492.6px;top:105.17px">Developer; Product manager</div>
<div class="g" style="right:113.9px;top:117.6px">Create Project Proposal</div>
<div class="g" style="left:523.4px;top:117.6px">Project manager</div>
<div class="g" style="right:83px;top:130.03px">Create Timeline</div>
<div class="g" style="left:569.6px;top:130.03px">Project manager</div>
<div class="g" style="right:36.6px;top:142.46px">Create Task List</div>
<div class="g" style="left:585.1px;top:142.46px">Project manager</div>
<div class="g" style="right:21.2px;top:154.89px">Create Content Chart</div>
<div class="g" style="left:532.5px;top:167.32px">Define Communications</div>
<div class="g" style="left:553.8px;top:179.75px">Create Site Map</div>
<div class="g" style="left:553.6px;top:192.18px">Pre Production finished</div>
</div>
<svg style="position:absolute;left:600px;top:44px" width="168" height="436" viewBox="600 44 168 436"><defs><clipPath id="pc1"><rect x="604.300" y="46.800" width="157.700" height="19.800" rx="2.500"/></clipPath><clipPath id="pc2"><rect x="604.300" y="72.600" width="157.700" height="11.700" rx="2.500"/></clipPath></defs><g clip-path="url(#pc1)"><rect x="600" y="44" width="168" height="30" fill="#625c5e"/><rect x="736.900" y="44" width="30" height="30" fill="#918d8e"/></g><g clip-path="url(#pc2)"><rect x="600" y="70" width="168" height="20" fill="#625c5e"/><rect x="600" y="70" width="83.200" height="20" fill="#918d8e"/></g><rect x="604.300" y="91" width="157.700" height="58.5" rx="2.500" fill="#625c5e"/><rect x="604.300" y="154.8" width="157.700" height="43.7" rx="2.500" fill="#625c5e"/><rect x="604.300" y="203.8" width="157.700" height="50.8" rx="2.500" fill="#625c5e"/><rect x="604.300" y="259.6" width="157.700" height="37" rx="2.500" fill="#625c5e"/><rect x="604.300" y="458.300" width="129.900" height="16.200" rx="2.500" fill="#625c5e"/><rect x="738.800" y="458.300" width="23.500" height="16.200" rx="2.500" fill="#625c5e"/></svg>
<svg style="position:absolute;left:604px;top:46px" width="158" height="21" viewBox="604 46 158 21" fill="none" stroke="#f4f2f2" stroke-width="0.800" stroke-linejoin="round" stroke-linecap="round">
<path d="M613.300 53.400h8.400v8.500h-8.400z" fill="#f4f2f2" stroke="none"/><path d="M615.400 54.200l.6-2h.9l.6-.8.600.8h.9l.6 2z" fill="#f4f2f2" stroke="#f4f2f2" stroke-width="0.300"/><circle cx="617.500" cy="52.300" r="0.350" fill="#625c5e" stroke="none"/><path d="M615.300 57.700l1.500 1.600 2.700-3.300" stroke="#4a4446" stroke-width="1"/>
<g transform="translate(644.100,56.900) rotate(-43)" stroke-width="0.900"><rect x="-5.900" y="-1.600" width="6.900" height="3.200" rx="1.600"/><rect x="-1" y="-1.600" width="6.900" height="3.200" rx="1.600"/></g>
<path d="M666.700 52.600h5.600M666.700 54.600h5.600M667.700 56.600h3.400M667.700 58.600h2.200M665.800 61.200h4.600" stroke-width="1" stroke-linecap="butt" stroke="#e2dfe0"/><circle cx="673" cy="59.400" r="3.400" fill="#625c5e" stroke="none"/><circle cx="673" cy="59.400" r="2.900" fill="#f4f2f2" stroke="none"/><path d="M673.800 58.400c-.5-.5-1.600-.4-1.600.3 0 .8 1.600.5 1.600 1.400 0 .6-1.100.8-1.700.3M673 57.500v3.800" stroke="#5e585a" stroke-width="0.380"/>
<path d="M696.200 52.900a4.600 4.600 0 1 0 2.600-.1" stroke-width="0.850"/><path d="M698.400 51.200l1.600 1.800-2.200.9z" fill="#f4f2f2" stroke-width="0.300"/><path d="M696.300 59.100l2.900-3.200" stroke-width="0.600"/><circle cx="696.400" cy="56.300" r="0.700" stroke-width="0.500"/><circle cx="699.100" cy="58.800" r="0.700" stroke-width="0.500"/>
<g stroke="none" fill="#f4f2f2"><rect x="718.900" y="52.300" width="7.600" height="2.100" rx="0.300"/><rect x="727.100" y="52.300" width="1.900" height="2.100"/><rect x="718.900" y="55.950" width="7.600" height="2.100" rx="0.300"/><rect x="727.100" y="55.950" width="1.900" height="2.100"/><rect x="718.900" y="59.600" width="7.600" height="2.100" rx="0.300"/><rect x="727.100" y="59.600" width="1.900" height="2.100"/></g>
<rect x="745.300" y="52" width="10.300" height="9.700" rx="0.500" fill="#f6f4f4" stroke="none"/><path d="M747.200 60l.5-1.700 5.200-5.100 1.200 1.200-5.200 5.100z" fill="#6e696b" stroke="none"/>
</svg>
<div class="t" style="left:604.300px;width:79px;text-align:center;top:75.600px;font-size:6.500px;color:#f6f4f4">Comments</div>
<div class="t" style="left:683.300px;width:78.700px;text-align:center;top:75.600px;font-size:6.500px;color:#f6f4f4">Notes</div>
<div class="card" style="top:91px;height:58.5px">
<svg class="av" style="top:4.400px" viewBox="0 0 18 18" preserveAspectRatio="none"><defs><filter id="bl0" x="-10%" y="-10%" width="120%" height="120%"><feGaussianBlur stdDeviation="0.45"/></filter></defs><rect width="18" height="18" fill="#f3eee1"/><g filter="url(#bl0)"><rect x="-1" y="-1" width="20" height="20" fill="#f3eee1"/><ellipse cx="1.5" cy="1.500" rx="2.600" ry="2.200" fill="#6d4c36"/><ellipse cx="15.500" cy="11.500" rx="2.600" ry="5.500" fill="#a8bf7c"/><ellipse cx="0.800" cy="7" rx="1.800" ry="3" fill="#b5c48c"/><ellipse cx="12.500" cy="2" rx="3" ry="1.500" fill="#e2dcc0"/><path d="M1.200 18C0.200 12 2.500 3.600 7.600 3.600S13.800 10 13.300 14L14 18z" fill="#47201f"/><ellipse cx="7.700" cy="9.900" rx="2.500" ry="3.400" fill="#dca78f"/><ellipse cx="7.700" cy="11.900" rx="1" ry="0.450" fill="#c23f5c"/><path d="M0.300 18C0.800 15.400 3 14.600 5 15.400L7.300 18zM7.200 18L8.600 15C10.800 14.500 12.200 16 12.600 18z" fill="#ef6aa9"/></g></svg>
<div class="nm" style="top:4.600px">Product manager</div>
<div class="dt" style="top:13.600px">9/22/20, 1:30 AM</div>
<div class="bd" style="top:25.800px">The customer did not really understand the usage<br>scenarios and now wants to deliver a better<br>document in a second attempt. But he will certainly<br>need another two days for this.</div>
</div>
<div class="card" style="top:154.8px;height:43.7px">
<svg class="av" style="top:4.400px" viewBox="0 0 18 18" preserveAspectRatio="none"><defs><filter id="bl1" x="-10%" y="-10%" width="120%" height="120%"><feGaussianBlur stdDeviation="0.400"/></filter></defs><rect width="18" height="18" fill="#eef0f3"/><g filter="url(#bl1)"><rect x="-1" y="-1" width="20" height="20" fill="#eef0f3"/><path d="M2.800 18.500C4 15 6.500 13.600 9 14.600L13 10.200C15 10.600 17 12 18.500 14V18.500z" fill="#2d7fb4"/><path d="M8.200 13.500l2.800-1 .8 3.300-2 2.200z" fill="#2a2320"/><ellipse cx="8.700" cy="9" rx="3.100" ry="4.200" fill="#cba28e"/><path d="M5 7.800C4 4 6.500 1.900 9 2.100S13 3.600 12.300 7.400C11.500 5.600 10 5 8.600 5.200S6 6 5 7.800z" fill="#3c2d24"/><ellipse cx="8.800" cy="10.300" rx="1.700" ry="1.300" fill="#b88974"/></g></svg>
<div class="nm" style="top:4.600px">Developer</div>
<div class="dt" style="top:13.600px">9/22/20, 1:42 AM</div>
<div class="bd" style="top:25.800px">I already thought so <span style="position:relative;display:inline-block;width:7px;height:7px;vertical-align:-1.3px;color:transparent;font-size:5px;overflow:hidden;line-height:7px">😒<svg style="position:absolute;left:0;top:0" width="7" height="7" viewBox="0 0 7 7"><circle cx="3.500" cy="3.500" r="3.300" fill="#f8c631"/><path d="M1.300 2.700c.5-.4 1.100-.4 1.500 0M4.200 2.700c.5-.4 1.100-.4 1.500 0M2.600 5.100c.6-.4 1.400-.4 2 0" fill="none" stroke="#7a4a10" stroke-width="0.500"/></svg></span>. The first try was not very<br>successful.</div>
</div>
<div class="card" style="top:203.8px;height:50.8px">
<svg class="av" style="top:4.400px" viewBox="0 0 18 18" preserveAspectRatio="none"><defs><filter id="bl2" x="-10%" y="-10%" width="120%" height="120%"><feGaussianBlur stdDeviation="0.400"/></filter></defs><rect width="18" height="18" fill="#f4f4f6"/><g filter="url(#bl2)"><rect x="-1" y="-1" width="20" height="20" fill="#f4f4f6"/><path d="M1.400 18.500C1.200 11 3.500 3.800 9 3.800S15.800 11 15.200 18.500z" fill="#141010"/><ellipse cx="9.100" cy="12.200" rx="3.900" ry="5.500" fill="#c46a30"/><path d="M5.600 10.800h7" stroke="#3a2418" stroke-width="0.800"/><ellipse cx="9.300" cy="15.400" rx="1.500" ry="0.800" fill="#f2ece8"/><path d="M4.500 18.500l1.500-1.800 1.500 1.800z M11 18.500l1.500-1.800 1.500 1.800z" fill="#9aa6b0"/></g></svg>
<div class="nm" style="top:4.600px">Designer</div>
<div class="dt" style="top:13.600px">9/22/20, 2:06 AM</div>
<div class="bd" style="top:25.800px">Hey <b>Project manager</b>, can't you send the customer<br>the document from last time? That was really neatly<br>worked out!</div>
</div>
<div class="card" style="top:259.6px;height:37px">
<svg class="av" style="top:4.400px" viewBox="0 0 18 18" preserveAspectRatio="none"><defs><filter id="bl3" x="-10%" y="-10%" width="120%" height="120%"><feGaussianBlur stdDeviation="0.400"/></filter></defs><rect width="18" height="18" fill="#efe8dc"/><g filter="url(#bl3)"><rect x="-1" y="-1" width="20" height="20" fill="#eee7da"/><rect x="-1" y="-1" width="2.200" height="20" fill="#cdc4b4"/><rect x="6.600" y="-1" width="1" height="9" fill="#d9d0c0"/><rect x="9.400" y="-1" width="0.800" height="9" fill="#dcd3c4"/><rect x="7.600" y="-1" width="1.800" height="9" fill="#f6f2ea"/><path d="M2.800 18.500C1.600 12 3.600 5.200 8.200 5.200S14.200 10 14.200 14L15.200 18.500z" fill="#4e3224"/><ellipse cx="7.800" cy="10.600" rx="2.700" ry="3.700" fill="#bb876a"/><path d="M6.800 13.200l1.600-1.400 1 1.400-.4 3.600H7.200z" fill="#c3927a"/><path d="M5.500 18.500l1-1.600h3.600l1 1.600z" fill="#9aa2a2"/></g></svg>
<div class="nm" style="top:4.600px">Project manager</div>
<div class="dt" style="top:13.600px">9/22/20, 2:48 AM</div>
<div class="bd" style="top:25.800px">No <b>Designer</b>, unfortunately this is under NDA!</div>
</div>
<div class="t" style="left:604.300px;width:129.900px;text-align:center;top:464.500px;font-size:6.350px;color:#f6f4f4">New Comment</div>
<svg style="position:absolute;left:738.800px;top:458.300px" width="23.200" height="16.500" viewBox="0 0 23.200 16.500" fill="none" stroke="#d8d5d6" stroke-width="0.600"><circle cx="9.300" cy="8.300" r="3.300"/><path d="M15 7.500l1.400 1.400 1.400-1.400"/><g fill="#d8d5d6" stroke="none"><circle cx="7.700" cy="8.300" r="0.450"/><circle cx="9.300" cy="8.300" r="0.450"/><circle cx="10.900" cy="8.300" r="0.450"/></g></svg>
<div style="position:absolute;left:230px;top:292.600px;width:298.300px;height:147.400px;background:#fff;border-radius:4px;box-shadow:0 0 0 0.500px rgba(0,0,0,.20),0 5px 14px rgba(0,0,0,.30);overflow:hidden">
<div style="position:absolute;left:0;top:0;width:100%;height:29.400px;background:#f0e8ea;border-bottom:0.600px solid #d6cdd0"></div>
<div style="position:absolute;left:0;top:29.400px;width:100%;height:17px;background:#f2ebed;border-bottom:0.600px solid #d2cdcf"></div>
<div style="position:absolute;left:0;top:46.400px;width:100%;height:12px;background:#f6f3f4;border-bottom:0.600px solid #cfcbcc"></div>
<div style="position:absolute;left:2.8px;top:2.400px;width:5px;height:5px;border-radius:50%;background:#fe5f57"></div>
<div style="position:absolute;left:11px;top:2.400px;width:5px;height:5px;border-radius:50%;background:#febc2e"></div>
<div style="position:absolute;left:19px;top:2.400px;width:5px;height:5px;border-radius:50%;background:#28c840"></div>
<div class="n" style="left:130.700px;top:1px;font-size:6.650px;color:#5a5456">Notifications</div>
<div style="position:absolute;left:73px;top:15.200px;width:152.300px;height:9.100px;background:#eae1e4;border-radius:2.200px;box-shadow:0 0 0 0.400px rgba(0,0,0,.07)"></div>
<div style="position:absolute;left:73px;top:15.300px;width:36.400px;height:8.800px;background:#fff;border-radius:2.200px;box-shadow:0 0.300px 1.200px rgba(0,0,0,.35)"></div>
<div class="n" style="left:60.4px;width:60px;text-align:center;top:16.100px;font-size:6.300px;color:#2a2627">Comments</div>
<div class="n" style="left:98.3px;width:60px;text-align:center;top:16.100px;font-size:6.300px;color:#2a2627">Scheduling</div>
<div class="n" style="left:130px;width:60px;text-align:center;top:16.100px;font-size:6.300px;color:#2a2627">Import</div>
<div class="n" style="left:155.4px;width:60px;text-align:center;top:16.100px;font-size:6.300px;color:#2a2627">Export</div>
<div class="n" style="left:181.7px;width:60px;text-align:center;top:16.100px;font-size:6.300px;color:#2a2627">Publish</div>
<div style="position:absolute;left:147.1px;top:17.300px;width:0.500px;height:5px;background:#cfc7ca"></div>
<div style="position:absolute;left:173.2px;top:17.300px;width:0.500px;height:5px;background:#cfc7ca"></div>
<div style="position:absolute;left:198.4px;top:17.300px;width:0.500px;height:5px;background:#cfc7ca"></div>
<div style="position:absolute;left:5.500px;top:34.800px;width:6.700px;height:6.400px;background:#fff;border:0.500px solid #cbc5c7;border-radius:1.500px;box-shadow:0 0.300px 0.600px rgba(0,0,0,.15)"></div>
<div class="n" style="left:14.700px;top:34.500px;color:#2e2a2b">Open this window when new comments appear</div>
<svg style="position:absolute;left:285.700px;top:34.400px" width="7" height="7" viewBox="0 0 7 7" fill="none" stroke="#c9c3c5" stroke-width="0.600"><path d="M5.900 3.700a2.400 2.400 0 1 1-2.400-2.400h1"/><path d="M3.800 0.300l1 1-1 1"/></svg>
<div class="n" style="left:19.8px;top:48.700px;color:#262223">Source</div>
<div class="n" style="left:99.8px;top:48.700px;color:#262223">Author</div>
<div class="n" style="left:171.1px;top:48.700px;color:#262223">Comment</div>
<div style="position:absolute;left:16.3px;top:46.900px;width:0.500px;height:11.500px;background:#d6d2d3"></div>
<div style="position:absolute;left:96.7px;top:46.900px;width:0.500px;height:11.500px;background:#d6d2d3"></div>
<div style="position:absolute;left:167.7px;top:46.900px;width:0.500px;height:11.500px;background:#d6d2d3"></div>
<div style="position:absolute;left:5.500px;top:68px;width:5px;height:5px;border-radius:50%;background:#1a73f0"></div>
<div class="n" style="left:19.800px;top:67.1px">User Scenarios</div>
<div class="n" style="left:99.800px;top:67.1px">Designer</div>
<div class="n" style="left:171.100px;top:59.85px">Hey Project manager, can't you send the<br>customer the document from last time?<br>That was really neatly worked out!</div>
<div style="position:absolute;left:5.500px;top:89.2px;width:5px;height:5px;border-radius:50%;background:#1a73f0"></div>
<div class="n" style="left:19.800px;top:88.3px">User Scenarios</div>
<div class="n" style="left:99.800px;top:88.3px">Project manager</div>
<div class="n" style="left:171.100px;top:84.7px">No Designer, unfortunately this is under<br>NDA!</div>
</div>
<svg style="position:absolute;left:0;top:0;pointer-events:none" width="768" height="480" viewBox="0 0 768 480"><path fill-rule="evenodd" d="M0 0H768V480H0z M4.300 0.900H764.500Q768 0.900 768 4.400V477Q768 480 765 480H3.800Q0.800 480 0.800 477V4.400Q0.800 0.900 4.300 0.900z" fill="#e7e7e7"/></svg>
</div></body></html>
